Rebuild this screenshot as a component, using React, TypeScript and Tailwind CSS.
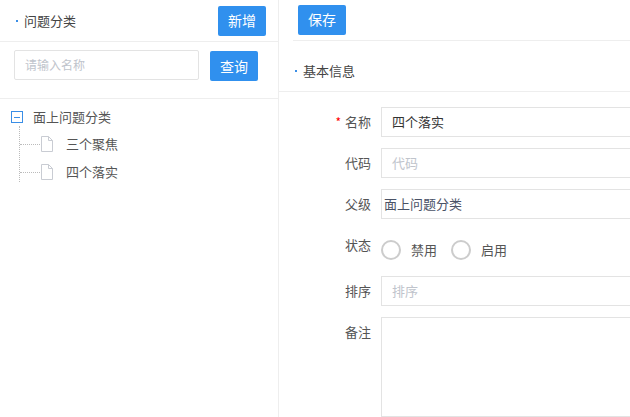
const font = { fontFamily: '"Noto Sans CJK SC", "Liberation Sans", sans-serif' };

function FileIcon() {
  return (
    <svg width="14" height="16" viewBox="0 0 14 16" className="shrink-0">
      <path d="M1.5 0.5h7l4 4v11h-11z" fill="#fff" stroke="#c9ccd3" />
      <path d="M8.5 0.5v4h4" fill="none" stroke="#c9ccd3" />
    </svg>
  );
}

function Field({ label, required, children }: { label: string; required?: boolean; children: React.ReactNode }) {
  return (
    <div className="flex items-start">
      <div className="w-[102px] pr-[10px] h-[30px] flex items-center justify-end text-[13px] text-[#555]">
        {required && <span className="text-[#f00] mr-1 text-[12px]">*</span>}
        {label}
      </div>
      {children}
    </div>
  );
}

export default function App() {
  return (
    <div className="flex w-[630px] h-[417px] bg-white overflow-hidden text-[13px] text-[#333]" style={font}>
      <div className="w-[279px] shrink-0 border-r border-[#eee] flex flex-col">
        <div className="h-[42px] border-b border-[#eee] flex items-center justify-between pl-[16px] pr-[12px]">
          <div className="flex items-center gap-[6px]">
            <span className="w-[2px] h-[2px] bg-[#3a8ee6]" />
            <span className="text-[#444]">问题分类</span>
          </div>
          <button className="w-[48px] h-[30px] rounded-[2px] bg-[#3090ee] text-white text-[14px]">新增</button>
        </div>
        <div className="h-[57px] border-b border-[#eee] flex items-start pt-[8px] pl-[14px] gap-[11px]">
          <div className="w-[185px] h-[30px] border border-[#e3e3e3] rounded-[2px] flex items-center px-[10px] text-[#c0c4cc] text-[12px]">请输入名称</div>
          <button className="w-[48px] h-[30px] mt-[1px] rounded-[2px] bg-[#3090ee] text-white text-[14px]">查询</button>
        </div>
        <div className="pt-[9px] pl-[11px]">
          <div className="flex items-center h-[18px] gap-[10px]">
            <span className="w-[12px] h-[12px] border border-[#3a8ee6] flex items-center justify-center">
              <span className="w-[6px] h-px bg-[#3a8ee6]" />
            </span>
            <span className="text-[#555]">面上问题分类</span>
          </div>
          <div className="ml-[8px] border-l border-dotted border-[#bbb] w-[200px]">
            {["三个聚焦", "四个落实"].map((t) => (
              <div key={t} className="flex items-center h-[28px] pt-[8px]">
                <span className="w-[20px] border-t border-dotted border-[#bbb]" />
                <FileIcon />
                <span className="ml-[12px] text-[#555]">{t}</span>
              </div>
            ))}
          </div>
        </div>
      </div>
      <div className="flex-1 flex flex-col">
        <div className="h-[42px] ml-[14px] border-b border-[#eee] flex items-center pl-[5px]">
          <button className="w-[48px] h-[30px] rounded-[2px] bg-[#3090ee] text-white text-[14px]">保存</button>
        </div>
        <div className="h-[53px] border-b border-[#eee] flex items-center pl-[16px] gap-[6px] pt-[10px]">
          <span className="w-[2px] h-[2px] bg-[#3a8ee6]" />
          <span className="text-[#444]">基本信息</span>
        </div>
        <div className="flex flex-col gap-[11px] pt-[15px]">
          <Field label="名称" required>
            <div className="flex-1 h-[30px] border border-[#e3e3e3] border-r-0 flex items-center px-[10px] text-[#333]">四个落实</div>
          </Field>
          <Field label="代码">
            <div className="flex-1 h-[30px] border border-[#e3e3e3] border-r-0 flex items-center px-[10px] text-[#c0c4cc]">代码</div>
          </Field>
          <Field label="父级">
            <div className="flex-1 h-[30px] border border-[#e3e3e3] border-r-0 flex items-center px-[2px] text-[#4a5266]">面上问题分类</div>
          </Field>
          <Field label="状态">
            <div className="flex items-center h-[30px] mt-[5px]">
              <span className="w-[20px] h-[20px] rounded-full border-2 border-[#ccc]" />
              <span className="ml-[10px] text-[#555]">禁用</span>
              <span className="ml-[14px] w-[20px] h-[20px] rounded-full border-2 border-[#ccc]" />
              <span className="ml-[10px] text-[#555]">启用</span>
            </div>
          </Field>
          <Field label="排序">
            <div className="flex-1 h-[30px] border border-[#e3e3e3] border-r-0 flex items-center px-[10px] text-[#c0c4cc]">排序</div>
          </Field>
          <Field label="备注">
            <div className="flex-1 h-[100px] border border-[#e3e3e3] border-r-0" />
          </Field>
        </div>
      </div>
    </div>
  );
}
